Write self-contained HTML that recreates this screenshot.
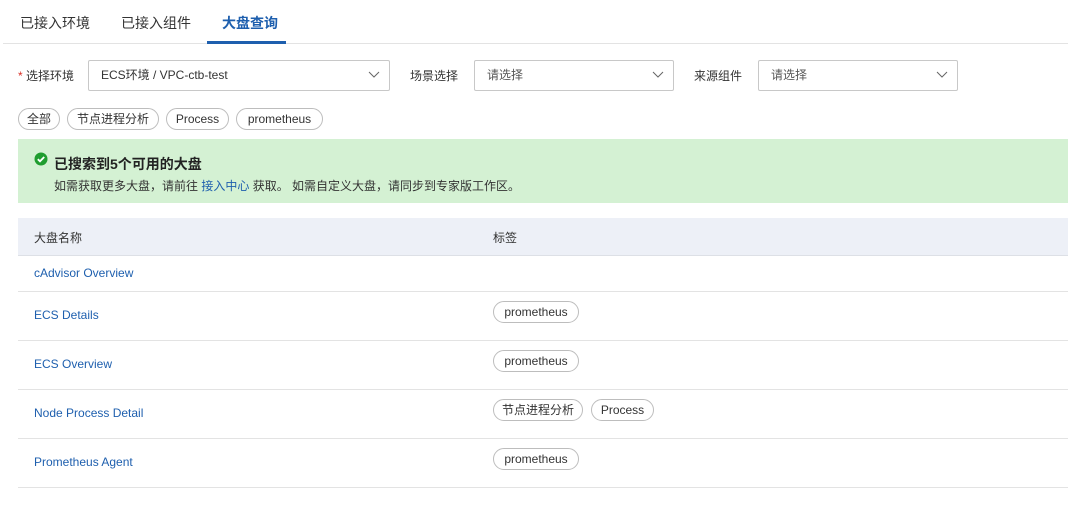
<!DOCTYPE html>
<html><head><meta charset="utf-8"><style>
*{box-sizing:border-box;margin:0;padding:0}
body{width:1068px;height:505px;background:#fff;font-family:"Liberation Sans","Noto Sans CJK SC",sans-serif;color:#333;position:relative;overflow:hidden;font-size:12px}
.a{position:absolute;white-space:nowrap}
.tab{font-size:14px;color:#333;top:13px}
.sel{position:absolute;height:31px;border:1px solid #c8c8c8;border-radius:2px;font-size:12px;line-height:29px;padding-left:12px;color:#333}
.sel svg{position:absolute;right:9px;top:10px}
.tag{position:absolute;height:22px;border:1px solid #bdbdbd;border-radius:11px;font-size:12px;line-height:20px;text-align:center;color:#333}
.lnk{color:#1e5fae;font-size:12px}
.hr{position:absolute;left:18px;right:0;height:1px;background:#e3e3e3}
</style></head><body>
<div class="a tab" style="left:20px">已接入环境</div>
<div class="a tab" style="left:121px">已接入组件</div>
<div class="a tab" style="left:222px;color:#1e5fae;font-weight:bold">大盘查询</div>
<div class="a" style="left:3px;right:0;top:43px;height:1px;background:#e3e3e3"></div>
<div class="a" style="left:207px;width:79px;top:41px;height:3px;background:#1e5fae"></div>

<div class="a" style="left:18px;top:67px"><span style="color:#d93026">*</span> 选择环境</div>
<div class="sel" style="left:88px;top:60px;width:302px">ECS环境 / VPC-ctb-test<svg width="12" height="8"><path d="M1 1l5 5 5-5" stroke="#666" fill="none"/></svg></div>
<div class="a" style="left:410px;top:67px">场景选择</div>
<div class="sel" style="left:474px;top:60px;width:200px;color:#555">请选择<svg width="12" height="8"><path d="M1 1l5 5 5-5" stroke="#666" fill="none"/></svg></div>
<div class="a" style="left:694px;top:67px">来源组件</div>
<div class="sel" style="left:758px;top:60px;width:200px;color:#555">请选择<svg width="12" height="8"><path d="M1 1l5 5 5-5" stroke="#666" fill="none"/></svg></div>

<div class="tag" style="left:18px;top:108px;width:42px">全部</div>
<div class="tag" style="left:67px;top:108px;width:92px">节点进程分析</div>
<div class="tag" style="left:166px;top:108px;width:63px">Process</div>
<div class="tag" style="left:236px;top:108px;width:87px">prometheus</div>

<div class="a" style="left:18px;right:0;top:139px;height:64px;background:#d4f1d3"></div>
<svg class="a" style="left:34px;top:152px" width="14" height="14"><circle cx="7" cy="7" r="6.5" fill="#1f9d2f"/><path d="M3.8 7.2l2.2 2.1 4.2-4.3" stroke="#fff" stroke-width="1.8" fill="none"/></svg>
<div class="a" style="left:54px;top:154px;font-size:14px;font-weight:bold;color:#222">已搜索到5个可用的大盘</div>
<div class="a" style="left:54px;top:177px;font-size:12px;color:#333">如需获取更多大盘，请前往 <span style="color:#1e5fae">接入中心</span> 获取。 如需自定义大盘，请同步到专家版工作区。</div>

<div class="a" style="left:18px;right:0;top:218px;height:38px;background:#edf0f7;border-bottom:1px solid #dde0e6"></div>
<div class="a" style="left:34px;top:229px;color:#333">大盘名称</div>
<div class="a" style="left:493px;top:229px;color:#333">标签</div>

<div class="a lnk" style="left:34px;top:266px">cAdvisor Overview</div>
<div class="hr" style="top:291px"></div>
<div class="a lnk" style="left:34px;top:308px">ECS Details</div>
<div class="tag" style="left:493px;top:301px;width:86px">prometheus</div>
<div class="hr" style="top:340px"></div>
<div class="a lnk" style="left:34px;top:357px">ECS Overview</div>
<div class="tag" style="left:493px;top:350px;width:86px">prometheus</div>
<div class="hr" style="top:389px"></div>
<div class="a lnk" style="left:34px;top:406px">Node Process Detail</div>
<div class="tag" style="left:493px;top:399px;width:90px">节点进程分析</div>
<div class="tag" style="left:591px;top:399px;width:63px">Process</div>
<div class="hr" style="top:438px"></div>
<div class="a lnk" style="left:34px;top:455px">Prometheus Agent</div>
<div class="tag" style="left:493px;top:448px;width:86px">prometheus</div>
<div class="hr" style="top:487px"></div>
</body></html>
